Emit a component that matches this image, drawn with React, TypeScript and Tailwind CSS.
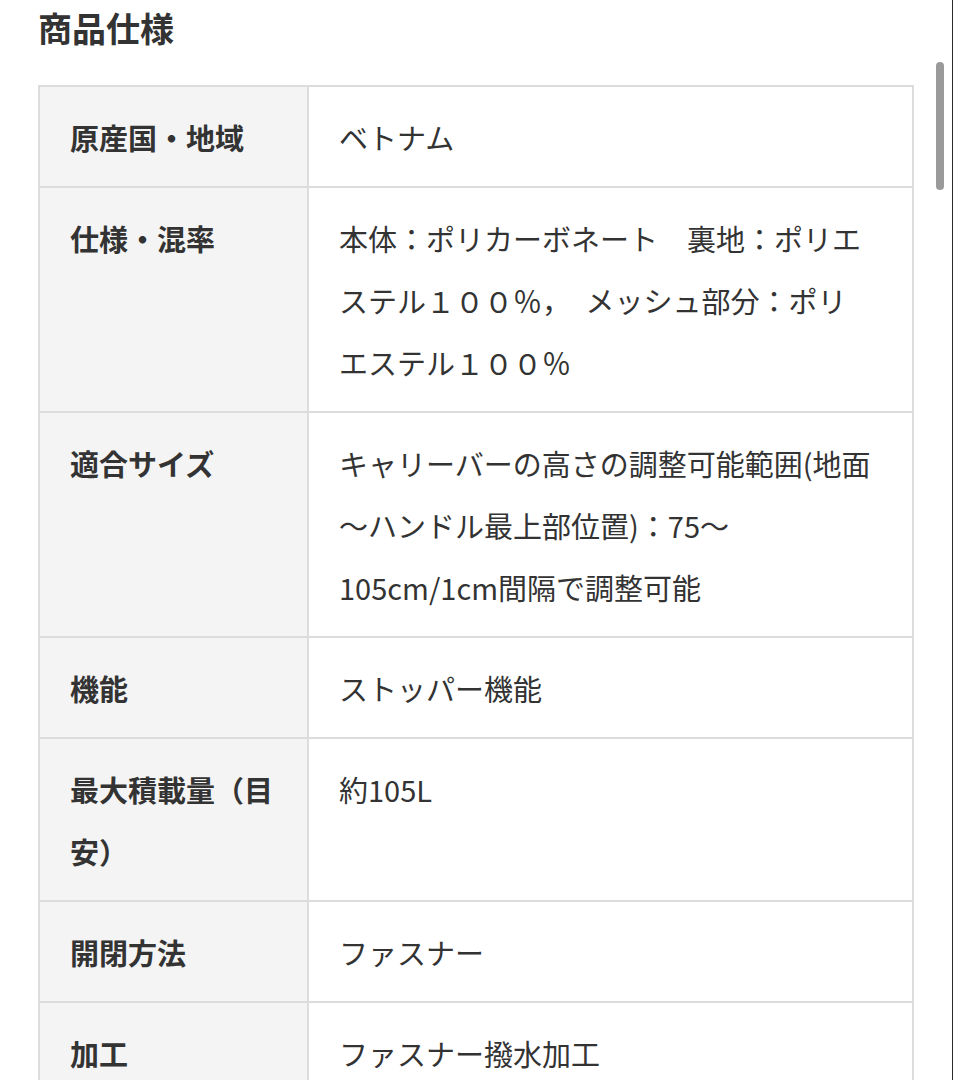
const specs: { label: string[]; value: string[] }[] = [
  { label: ["原産国・地域"], value: ["ベトナム"] },
  {
    label: ["仕様・混率"],
    value: [
      "本体：ポリカーボネート　裏地：ポリエ",
      "ステル１００％，　メッシュ部分：ポリ",
      "エステル１００％",
    ],
  },
  {
    label: ["適合サイズ"],
    value: [
      "キャリーバーの高さの調整可能範囲(地面",
      "〜ハンドル最上部位置)：75〜",
      "105cm/1cm間隔で調整可能",
    ],
  },
  { label: ["機能"], value: ["ストッパー機能"] },
  { label: ["最大積載量（目", "安）"], value: ["約105L"] },
  { label: ["開閉方法"], value: ["ファスナー"] },
  { label: ["加工"], value: ["ファスナー撥水加工"] },
];

export default function App() {
  return (
    <div
      className="relative h-[1080px] w-[953px] overflow-hidden border-r border-[#2a2a2a] bg-white text-[#333333]"
      style={{ fontFamily: '"Noto Sans CJK JP", "Noto Sans", sans-serif' }}
    >
      <div className="pl-[38px]">
        <h2 className="mt-[2px] mb-[32px] text-[34px] leading-[51px] font-bold">
          商品仕様
        </h2>
        <div className="w-[876px] border-2 border-[#dcdcdc]">
          {specs.map((row, i) => (
            <div
              key={row.label[0]}
              className={"flex " + (i > 0 ? "border-t-2 border-[#dcdcdc]" : "")}
            >
              <div className="w-[269px] shrink-0 border-r-2 border-[#dcdcdc] bg-[#f4f4f4] px-[30px] pt-[19px] pb-[18px] text-[29px] leading-[62px] font-bold whitespace-nowrap">
                {row.label.map((l) => (
                  <span key={l} className="block">
                    {l}
                  </span>
                ))}
              </div>
              <div className="min-w-0 flex-1 px-[30px] pt-[19px] pb-[18px] text-[29px] leading-[62px] whitespace-nowrap">
                {row.value.map((v) => (
                  <span key={v} className="block">
                    {v}
                  </span>
                ))}
              </div>
            </div>
          ))}
        </div>
      </div>

      {/* overlay scroll thumb */}
      <div className="absolute top-[62px] left-[936px] h-[128px] w-[8px] rounded-full bg-[#9a9a9a]" />
    </div>
  );
}
